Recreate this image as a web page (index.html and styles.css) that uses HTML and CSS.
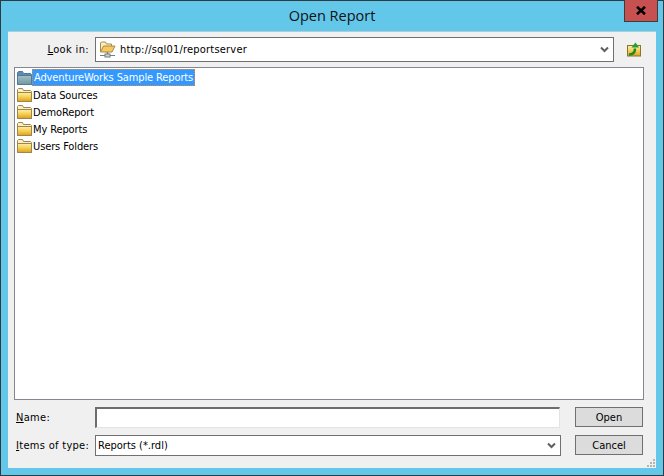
FILE: index.html
```html
<!DOCTYPE html>
<html lang="en">
<head>
<meta charset="utf-8">
<title>Open Report</title>
<link rel="stylesheet" href="styles.css">
</head>
<body>
<svg class="defs" width="0" height="0" aria-hidden="true">
  <defs>
    <linearGradient id="fold" x1="0" y1="0" x2="0" y2="1">
      <stop offset="0" stop-color="#fdf0a8"/>
      <stop offset="0.5" stop-color="#f6cf52"/>
      <stop offset="1" stop-color="#dc9f1e"/>
    </linearGradient>
    <linearGradient id="foldsel" x1="0" y1="0" x2="0" y2="1">
      <stop offset="0" stop-color="#a5c0c4"/>
      <stop offset="1" stop-color="#6f97a2"/>
    </linearGradient>
    <symbol id="folder" viewBox="0 0 15 14">
      <path d="M.5 13.500V1.500l1-1h4l1 2h7l1 1v10z" fill="#fbf0c0" stroke="#9c8550"/>
      <path d="M.5 13.500V4.500h14v9z" fill="url(#fold)" stroke="#9c8550"/>
    </symbol>
    <symbol id="foldersel" viewBox="0 0 15 14">
      <path d="M.5 13.500V1.500l1-1h4l1 2h7l1 1v10z" fill="#5c8cb4" stroke="#4f7a9c"/>
      <path d="M.5 13.500V4.500h14v9z" fill="url(#foldsel)" stroke="#4f7a9c"/>
    </symbol>
    <symbol id="chev" viewBox="0 0 9 7">
      <path d="M1 1.500l3.500 3.500L8 1.500" fill="none" stroke="#5f5f5f" stroke-width="2"/>
    </symbol>
  </defs>
</svg>
<div class="window">
  <header class="titlebar">
    <h1 class="title">Open Report</h1>
    <div class="close"><svg width="10" height="9" viewBox="0 0 10 9"><path d="M1 .8l8 7.400M9 .8L1 8.200" stroke="#000" stroke-width="2.600"/></svg></div>
  </header>
  <main class="panel">
    <div class="lookrow">
      <label class="looklabel"><u>L</u>ook in:</label>
      <div class="combo lookcombo">
        <svg class="netfolder" width="17" height="17" viewBox="0 0 17 17">
          <path d="M1.500 10.500V2l1-1h4l1 2h5v7z" fill="#fbeeb8" stroke="#a58a52"/>
          <path d="M1.500 11L4.500 5h11.500l-3 6z" fill="#f5c95a" stroke="#a58a52"/>
          <path d="M8.500 11v3" stroke="#6b7f93" stroke-width="1.500"/>
          <path d="M1 14.500h15" stroke="#6b7f93"/>
          <rect x="6" y="13" width="5" height="3" fill="#e6d48c" stroke="#6b7f93"/>
        </svg>
        <span class="combotext">http://sql01/reportserver</span>
        <svg class="chev" width="9" height="7"><use href="#chev"/></svg>
      </div>
      <svg class="upicon" width="16" height="15" viewBox="0 0 16 15">
        <rect x="1.500" y="3.500" width="13" height="10.500" fill="url(#fold)" stroke="#8a7430"/>
        <path d="M3 12.500c4 0 6-2 6-6" fill="none" stroke="#1c8a2c" stroke-width="2.500"/>
        <path d="M5.500 5.500L9.500 .5l3.500 5z" fill="#22a034"/>
      </svg>
    </div>
    <ul class="list">
      <li class="item"><svg class="ficon" width="15" height="14"><use href="#foldersel"/></svg><span class="name selected">AdventureWorks Sample Reports</span></li>
      <li class="item"><svg class="ficon" width="15" height="14"><use href="#folder"/></svg><span class="name">Data Sources</span></li>
      <li class="item"><svg class="ficon" width="15" height="14"><use href="#folder"/></svg><span class="name">DemoReport</span></li>
      <li class="item"><svg class="ficon" width="15" height="14"><use href="#folder"/></svg><span class="name">My Reports</span></li>
      <li class="item"><svg class="ficon" width="15" height="14"><use href="#folder"/></svg><span class="name">Users Folders</span></li>
    </ul>
    <div class="formgrid">
      <label class="flabel"><u>N</u>ame:</label>
      <input class="nameinput" type="text">
      <button class="btn" type="button">Open</button>
      <label class="flabel"><u>I</u>tems of type:</label>
      <div class="combo typecombo">
        <span class="typetext">Reports (*.rdl)</span>
        <svg class="chev" width="9" height="7"><use href="#chev"/></svg>
      </div>
      <button class="btn" type="button">Cancel</button>
    </div>
    <svg class="grip" width="10" height="10" viewBox="0 0 10 10"><path d="M7 1h2v2H7zM4 4h2v2H4zM7 4h2v2H7zM1 7h2v2H1zM4 7h2v2H4zM7 7h2v2H7z" fill="#b5b5b5"/></svg>
  </main>
</div>
</body>
</html>
```
FILE: styles.css
```css
* { box-sizing: border-box; }
html, body { margin: 0; padding: 0; }
body { width: 664px; height: 476px; overflow: hidden; font-family: "DejaVu Sans Condensed", "DejaVu Sans", sans-serif; font-size: 11px; color: #000; }
.defs { position: absolute; }
.window { width: 664px; height: 476px; background: #63c7ea; border: 1px solid #2f3b40; display: flex; flex-direction: column; padding: 0 7px 7px; }
.titlebar { height: 30px; flex: none; display: flex; align-items: center; justify-content: center; position: relative; }
.title { margin: 0; font: 400 14.500px/1 "Open Sans", sans-serif; color: #111; }
.close { position: absolute; right: -2px; top: -1px; width: 34px; height: 22px; background: #c75050; border: 1px solid #3c3c3c; border-top: 0; display: flex; align-items: center; justify-content: center; }
.panel { flex: 1; background: #f0f0f0; border-top: 1px solid #a9cfdc; padding: 5px 12px 0 6px; display: flex; flex-direction: column; position: relative; }
.lookrow { display: flex; align-items: center; height: 24px; flex: none; }
.looklabel { width: 75px; text-align: right; letter-spacing: .35px; }
.combo { background: #fff; border: 1px solid #707070; display: flex; align-items: center; }
.lookcombo { width: 519px; height: 25px; margin-left: 6px; padding: 0 0 0 3px; }
.netfolder { margin-right: 4px; flex: none; }
.combotext { flex: 1; letter-spacing: .2px; }
.typetext { flex: 1; }
.chev { margin-right: 4px; flex: none; }
.upicon { margin-left: 12px; flex: none; }
.list { list-style: none; margin: 6px 0 0; padding: 1px 0 0 2px; width: 630px; height: 333px; background: #fff; border: 1px solid #828790; flex: none; }
.item { display: flex; align-items: center; height: 17px; }
.ficon { flex: none; }
.name { padding: 0; margin-left: 1px; height: 17px; line-height: 19px; border: 0; white-space: nowrap; letter-spacing: -.12px; }
.selected { padding: 0 1px; margin-left: 0; line-height: 15px; background: #3399ff; color: #fff; border: 1px dotted #e08a2c; }
.formgrid { display: grid; grid-template-columns: 81px 466px 68px; column-gap: 0; grid-auto-rows: 21px; row-gap: 7px; margin-top: 7px; align-items: center; }
.flabel { padding-left: 2px; letter-spacing: .3px; }
.nameinput { width: 465px; height: 21px; background: #fff; border: 1px solid #abadb3; border-top: 2px solid #6d6d6d; border-left: 2px solid #6d6d6d; border-right-color: #e3e3e3; border-bottom-color: #e3e3e3; padding: 0; margin: 0; outline: 0; }
.typecombo { width: 466px; height: 21px; padding-left: 2px; }
.btn { width: 68px; height: 20px; margin: 0 0 0 14px; padding: 0; align-self: start; background: #dcdcdc; border: 1px solid #707070; font: inherit; color: #000; }
.grip { position: absolute; right: 0; bottom: 0; }
```
